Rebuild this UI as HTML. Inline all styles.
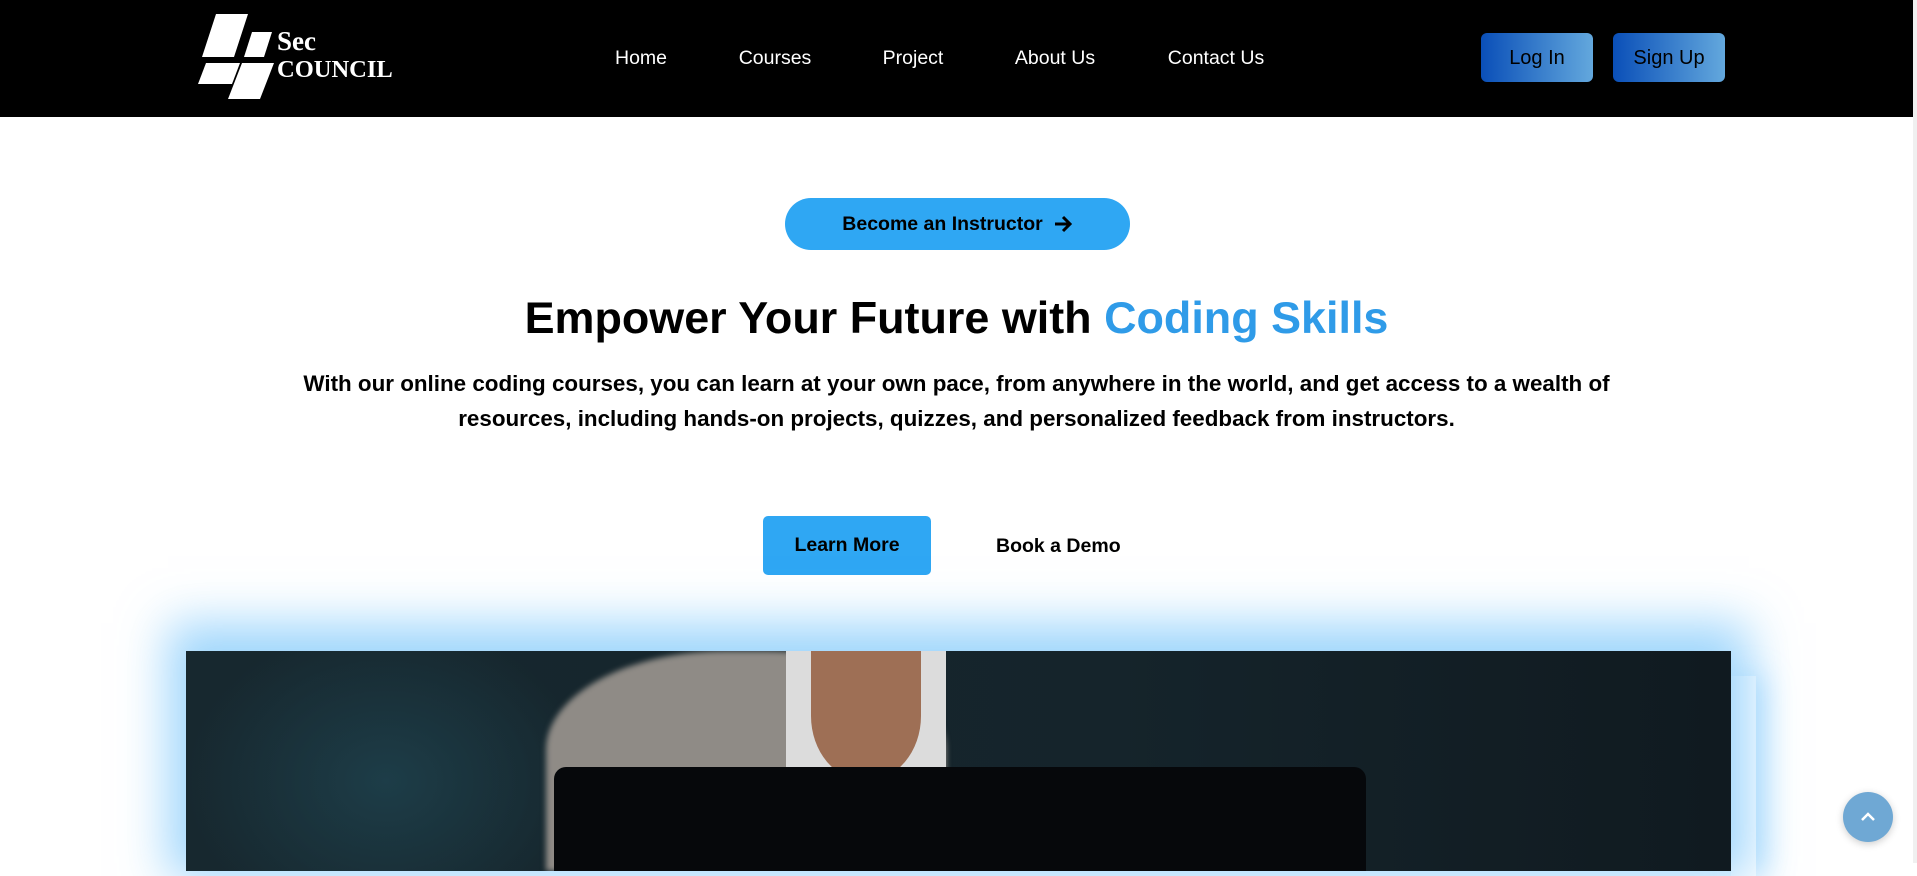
<!DOCTYPE html>
<html><head><meta charset="utf-8"><style>
*{margin:0;padding:0;box-sizing:border-box}
body{width:1917px;height:863px;overflow:hidden;background:#fff;font-family:"Liberation Sans",Arial,sans-serif;position:relative}
.nav{position:absolute;left:0;top:0;width:1913px;height:117px;background:#000}
.sb{position:absolute;right:0;top:0;width:4px;height:863px;background:#f0f0f0}
.link{position:absolute;top:47px;color:#fff;font-size:19.5px;transform:translateX(-50%)}
.btn{position:absolute;top:33px;width:112px;height:49px;border-radius:6px;background:linear-gradient(90deg,#0a4fb8,#63a8dd);color:#000;font-size:20px;display:flex;align-items:center;justify-content:center;padding-top:2px}
.pill{position:absolute;left:785px;top:198px;width:345px;height:52px;border-radius:26px;background:#2fa7f3;color:#000;font-weight:bold;font-size:19.5px;display:flex;align-items:center;justify-content:center;gap:10px}
h1{position:absolute;left:0;width:1913px;top:292px;text-align:center;font-size:44.9px;font-weight:bold;color:#000}
h1 span{color:#2f9be8}
p{position:absolute;left:270px;width:1373px;top:366px;text-align:center;font-size:22.4px;font-weight:bold;line-height:35px;color:#000}
.lm{position:absolute;left:763px;top:516px;width:168px;height:59px;background:#2fa7f3;border-radius:5px;font-weight:bold;font-size:19.5px;display:flex;align-items:center;justify-content:center}
.bd{position:absolute;left:996px;top:535px;font-weight:bold;font-size:19.5px}
.img{position:absolute;left:186px;top:651px;width:1545px;height:220px;box-shadow:0 -10px 45px 18px rgba(80,180,250,.55);background:radial-gradient(ellipse 200px 160px at 200px 130px,#1d3d48,transparent),linear-gradient(90deg,#17282f,#15242b 60%,#101a20);overflow:hidden}
.wb{position:absolute;left:1731px;top:676px;width:25px;height:200px;background:#fff;box-shadow:8px 0 30px rgba(80,180,250,.4)}
</style></head><body>
<div class="nav">
<svg style="position:absolute;left:196px;top:14px" width="80" height="86" viewBox="0 0 80 86">
<polygon fill="#fff" points="20,0 52,0 38,43 6,43"/>
<polygon fill="#fff" points="56,18 76,18 68,43 48,43"/>
<polygon fill="#fff" points="10,49 44,49 36,70 2,70"/>
<polygon fill="#fff" points="46,49 78,49 64,85 32,85"/>
</svg>
<div style="position:absolute;left:277px;top:28px;color:#fff;font-family:'Liberation Serif',serif;font-size:27px;line-height:27px;font-weight:bold">Sec<br><span style="font-size:24.5px">COUNCIL</span></div>
<div class="link" style="left:641px">Home</div>
<div class="link" style="left:775px">Courses</div>
<div class="link" style="left:913px">Project</div>
<div class="link" style="left:1055px">About Us</div>
<div class="link" style="left:1216px">Contact Us</div>
<div class="btn" style="left:1481px">Log In</div>
<div class="btn" style="left:1613px">Sign Up</div>
</div>
<div class="sb"></div>
<div class="pill">Become an Instructor <svg width="20" height="18" viewBox="0 0 20 18"><path d="M2 9H17M10 2L17 9L10 16" stroke="#000" stroke-width="3" fill="none"/></svg></div>
<h1>Empower Your Future with <span>Coding Skills</span></h1>
<p>With our online coding courses, you can learn at your own pace, from anywhere in the world, and get access to a wealth of resources, including hands-on projects, quizzes, and personalized feedback from instructors.</p>
<div class="lm">Learn More</div>
<div class="bd">Book a Demo</div>
<div class="wb"></div>
<div class="img">
<div style="position:absolute;left:360px;top:0;width:400px;height:220px;border-radius:45% 45% 0 0;background:#8f8b86;filter:blur(3px)"></div>
<div style="position:absolute;left:600px;top:0;width:160px;height:140px;background:#dcdcdc"></div>
<div style="position:absolute;left:625px;top:0;width:110px;height:130px;border-radius:0 0 50% 50%;background:#9e6f55"></div>
<div style="position:absolute;left:368px;top:116px;width:812px;height:120px;border-radius:12px;background:#06080b"></div>
</div>
<div style="position:absolute;left:1843px;top:792px;width:50px;height:50px;border-radius:50%;background:#6fa8d4;box-shadow:0 2px 8px rgba(0,0,0,.2)"><svg width="50" height="50" viewBox="0 0 50 50"><path d="M19 28L25 22L31 28" stroke="#fff" stroke-width="2.5" fill="none"/></svg></div>
</body></html>
